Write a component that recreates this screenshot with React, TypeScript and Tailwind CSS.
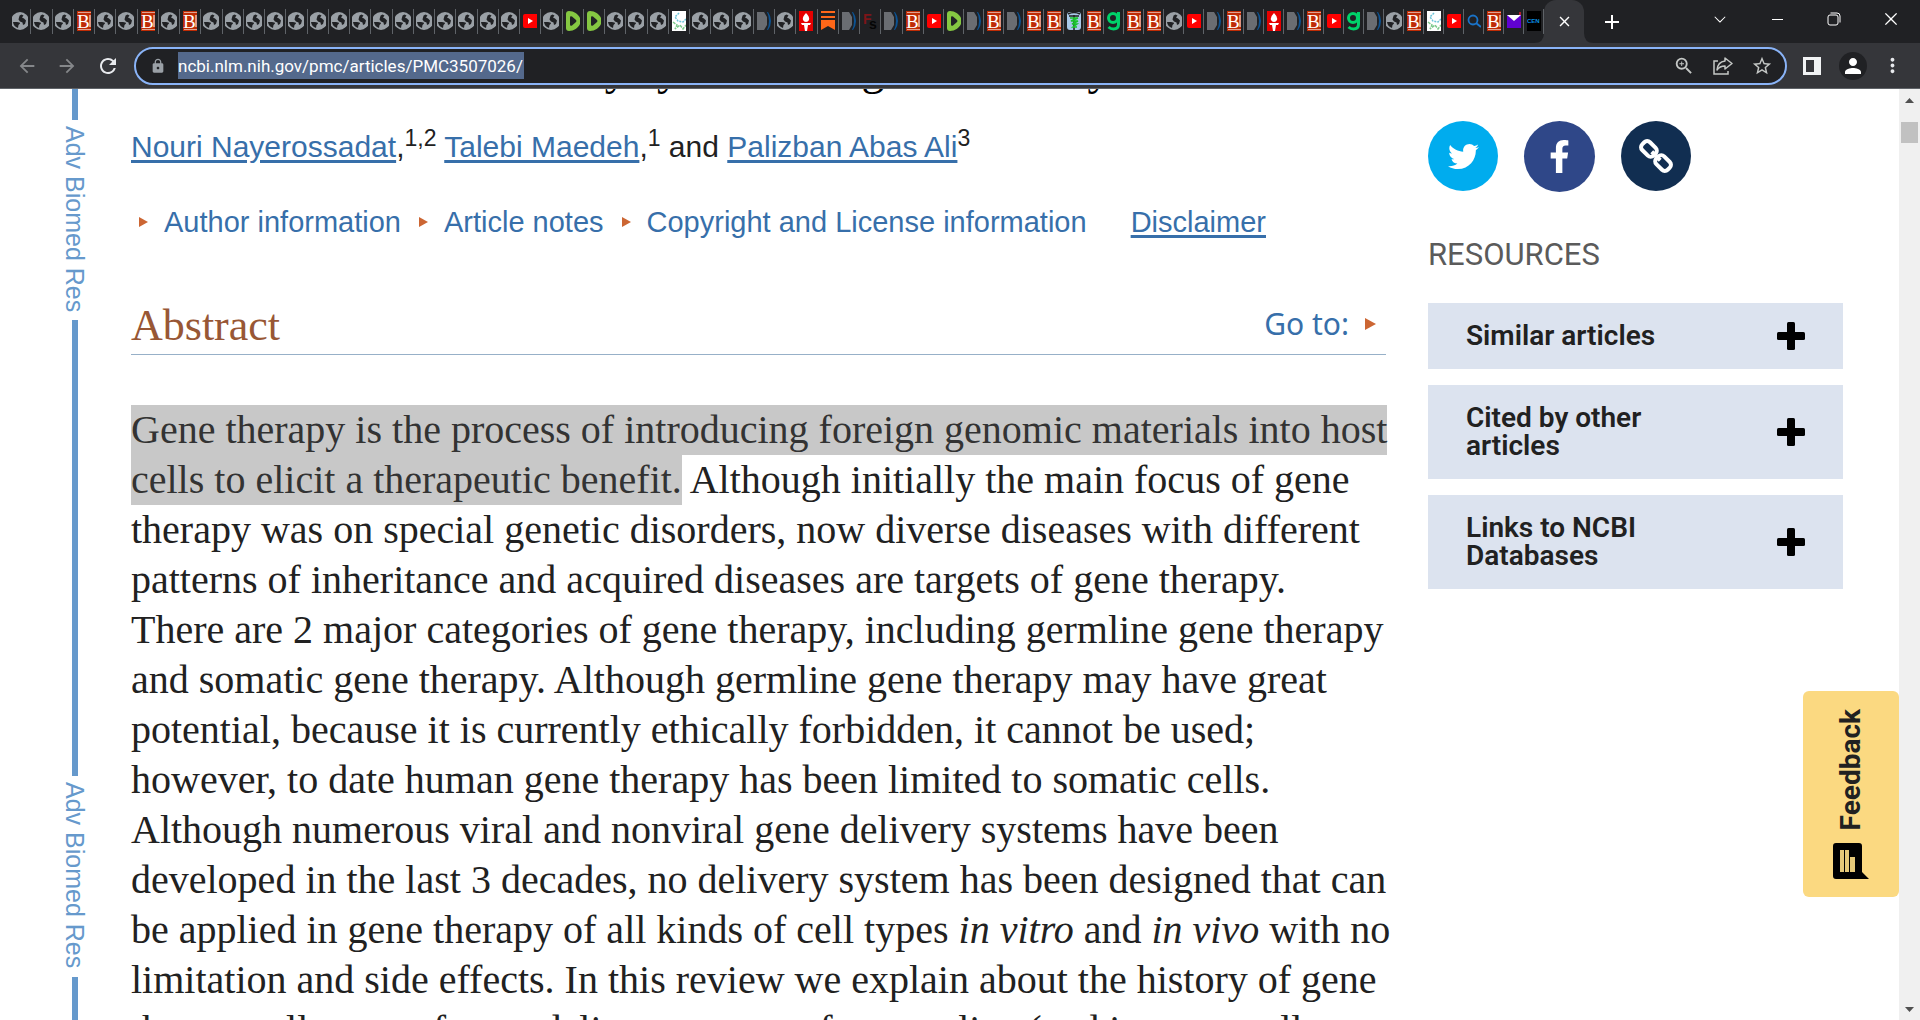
import React from "react";
import { FaTwitter, FaFacebookF } from "react-icons/fa";
import {
  MdArrowBack,
  MdArrowForward,
  MdRefresh,
  MdLock,
  MdStarBorder,
  MdZoomIn,
  MdPerson,
  MdMoreVert,
  MdAdd,
  MdClose,
} from "react-icons/md";
import { VscChromeMinimize, VscChromeClose, VscChevronDown } from "react-icons/vsc";

type IconName =
  | "globe"
  | "britannica"
  | "youtube"
  | "rumble"
  | "molecule"
  | "page"
  | "torch"
  | "substack"
  | "fs"
  | "medical"
  | "guru"
  | "search"
  | "mail"
  | "cen";

const codes: Record<string, IconName> = {
  G: "globe",
  B: "britannica",
  Y: "youtube",
  R: "rumble",
  M: "molecule",
  P: "page",
  T: "torch",
  S: "substack",
  F: "fs",
  C: "medical",
  U: "guru",
  Q: "search",
  E: "mail",
  N: "cen",
};

// one letter per open tab, in order
const wideTabs = "GGGBGGBGBGGGGGGGGGGGGGGGYGRRGGGMGGGPGTSPFPB";
const narrowTabs = "YRPBPBBCBUBBGYPBPTPBYUPGBMYQBEN";

const Favicon = ({ name }: { name: IconName }) => {
  switch (name) {
    case "globe":
      return (
        <svg width="20" height="20" viewBox="0 0 20 20">
          <circle cx="8" cy="10" r="9" fill="#9aa0a6" />
          <path
            d="M1 11h4q3 0 3 1.500L6.500 14l-.5 3Q1.500 15.500 1 11zM7 6.500Q7 4 9.500 3.500l2 1L10 6.500l2 1 2 2-1 3.500-2 1-.5-2.500-2.500-1L6.500 8.500z"
            fill="#202124"
          />
        </svg>
      );
    case "britannica":
      return (
        <svg width="20" height="20" viewBox="0 0 20 20">
          <rect width="20" height="20" fill="#bf2c05" />
          <path d="M1 1.500h18M1 18.500h18" stroke="#e2a18e" strokeWidth="1" />
          <text x="0" y="17" fontSize="19" fontFamily="Liberation Serif, serif" fill="#fff">
            B
          </text>
          <path d="M13 4v12" stroke="#fff" strokeWidth="1" />
        </svg>
      );
    case "youtube":
      return (
        <svg width="20" height="20" viewBox="0 0 20 20">
          <rect y="3" width="20" height="14" rx="2" fill="#f00" />
          <path d="M5 7l5 3-5 3z" fill="#fff" />
        </svg>
      );
    case "rumble":
      return (
        <svg width="20" height="20" viewBox="0 0 20 20">
          <path d="M0 3q0-3 3-3c5 0 9 3 11 7q1.500 3 0 6c-2 4-6 7-11 7q-3 0-3-3z" fill="#85c742" />
          <path d="M4 6.500q0-2 2-1l4 3.500q1 1 0 2l-4 3.500q-2 1-2-1z" fill="#202124" />
        </svg>
      );
    case "molecule":
      return (
        <svg width="20" height="20" viewBox="0 0 20 20">
          <rect width="20" height="20" fill="#fff" />
          <g fill="none" strokeWidth="1.500">
            <path d="M7 2L3 6l3 4 5 1 3-3" stroke="#6cc5d8" strokeDasharray="2 1" />
            <path d="M1 11l4 3-2 4 5-4 3 4 3-4" stroke="#7cc98c" strokeDasharray="3 1" />
          </g>
        </svg>
      );
    case "page":
      return (
        <svg width="20" height="20" viewBox="0 0 20 20">
          <path d="M0 1h7l3 5v8l-3 5H0z" fill="#6a6d72" />
          <path d="M10 1h1q3 4 3 9t-3 9h-1q2-4 2-9t-2-9z" fill="#0b5394" />
        </svg>
      );
    case "torch":
      return (
        <svg width="20" height="20" viewBox="0 0 20 20">
          <rect width="20" height="20" fill="#e60000" />
          <path d="M7 2q4 4 3 7-1 2-3 2t-3-2q-1-3 3-7zM2 12h10l-1 2H9l-1 6H6l-1-6H3z" fill="#fff" />
        </svg>
      );
    case "substack":
      return (
        <svg width="20" height="20" viewBox="0 0 20 20">
          <path d="M0 0h14v2H0zM0 5h14v2H0zM0 9h14v10l-7-4-7 4z" fill="#ff6719" />
        </svg>
      );
    case "fs":
      return (
        <svg width="20" height="20" viewBox="0 0 20 20" fontFamily="Liberation Sans, sans-serif" fontWeight="700">
          <text x="0" y="13" fontSize="14" fill="#7d1518">
            F
          </text>
          <text x="6" y="18" fontSize="14" fill="#050505">
            s
          </text>
        </svg>
      );
    case "medical":
      return (
        <svg width="20" height="20" viewBox="0 0 20 20">
          <rect y="1" width="14" height="18" rx="3" fill="#a9c9ea" />
          <path d="M1 3q6-3 12 0M2 5h10" fill="none" stroke="#222" strokeWidth="1.500" />
          <path d="M7 4v16" stroke="#222" strokeWidth="1.500" />
          <path d="M3 7h8L4 10h7l-6 3h5l-4 3h4" fill="none" stroke="#19c52b" strokeWidth="1.500" />
        </svg>
      );
    case "guru":
      return (
        <svg width="20" height="20" viewBox="0 0 20 20">
          <g fill="none" stroke="#00d26a" strokeWidth="3">
            <circle cx="6" cy="7" r="4.500" />
            <path d="M11.500 1v12q0 5-5 5-3 0-5-2" />
          </g>
        </svg>
      );
    case "search":
      return (
        <svg width="20" height="20" viewBox="0 0 20 20">
          <circle cx="6" cy="9" r="4.500" fill="none" stroke="#1a73c8" strokeWidth="1.800" />
          <path d="M9 12l5 4" stroke="#1a73c8" strokeWidth="2" />
        </svg>
      );
    case "mail":
      return (
        <svg width="20" height="20" viewBox="0 0 20 20">
          <rect y="4" width="20" height="13" fill="#6001d2" />
          <path d="M0 4h14l-7 6z" fill="#fff" />
          <path d="M13 1v3" stroke="#e0202c" strokeWidth="1.500" />
        </svg>
      );
    case "cen":
      return (
        <svg width="20" height="20" viewBox="0 0 20 20">
          <rect width="20" height="20" fill="#000" />
          <text x="0" y="12" fontSize="6" fontWeight="700" fontFamily="Liberation Sans, sans-serif" fill="#0a8fe0">
            CEN
          </text>
        </svg>
      );
  }
};

const TabGroup = ({ tabs, className }: { tabs: string; className: string }) => (
  <div className={`flex h-full items-center pb-px ${className}`}>
    {tabs.split("").map((code, i) => (
      <button
        key={i}
        aria-label={`${codes[code]} tab`}
        className="flex h-[25px] flex-1 items-center justify-center border-r border-[#5f6368]"
      >
        <span className={code === "G" ? "block h-5 w-4 overflow-hidden" : "block h-5 w-[14px] overflow-hidden"}>
          <Favicon name={codes[code]} />
        </span>
      </button>
    ))}
  </div>
);

const TabStrip = () => (
  <div className="flex h-[43px] shrink-0 items-center justify-between bg-[#202124] text-white">
    <div className="flex h-full items-center pl-[10px]">
      <TabGroup tabs={wideTabs} className="w-[914px]" />
      <TabGroup tabs={narrowTabs} className="w-[620px]" />
      <div className="relative flex h-full w-10 items-center justify-center rounded-t-xl bg-[#35363a]">
        <svg className="absolute bottom-0 -left-[10px]" width="10" height="10">
          <path d="M10 0v10H0Q10 10 10 0z" fill="#35363a" />
        </svg>
        <svg className="absolute bottom-0 -right-[10px]" width="10" height="10">
          <path d="M0 0v10h10Q0 10 0 0z" fill="#35363a" />
        </svg>
        <button aria-label="Close tab">
          <MdClose size={17} />
        </button>
      </div>
      <button aria-label="New tab" className="ml-4">
        <MdAdd size={24} />
      </button>
    </div>
    <div className="flex h-[37px] items-center self-start pr-px">
      <button aria-label="Search tabs" className="flex w-[57px] justify-center">
        <VscChevronDown size={18} />
      </button>
      <button aria-label="Minimize" className="flex w-[57px] justify-center">
        <VscChromeMinimize size={16} />
      </button>
      <button aria-label="Restore" className="flex w-[57px] justify-center">
        <svg width="14" height="14" viewBox="0 0 14 14" fill="none" stroke="#fff">
          <rect x="1" y="3" width="10" height="10" rx="2" />
          <path d="M3.500 1H10q3 0 3 3v6.500" />
        </svg>
      </button>
      <button aria-label="Close" className="flex w-[57px] justify-center">
        <VscChromeClose size={18} />
      </button>
    </div>
  </div>
);

const Toolbar = () => (
  <div className="flex h-[46px] shrink-0 items-center border-b border-[#5f6368] bg-[#35363a] px-4 text-[#e8eaed]">
    <button aria-label="Back" className="mr-[18px] text-[#85878a]">
      <MdArrowBack size={22} />
    </button>
    <button aria-label="Forward" className="mr-[18px] text-[#85878a]">
      <MdArrowForward size={22} />
    </button>
    <button aria-label="Reload" className="mr-[14px]">
      <MdRefresh size={24} />
    </button>
    <div className="flex h-[38px] flex-1 items-center rounded-full border-2 border-[#8ab4f8] bg-[#202124] pr-3 pl-[14px]">
      <MdLock size={16} className="mr-[12px] text-[#9aa0a6]" />
      <input
        aria-label="Address"
        readOnly
        defaultValue="ncbi.nlm.nih.gov/pmc/articles/PMC3507026/"
        className="h-[27px] w-[346px] bg-[#54698c] font-['Roboto',sans-serif] text-[17px] text-white outline-none"
      />
      <div className="ml-auto flex items-center gap-[18px] text-[#c4c7c5]">
        <button aria-label="Zoom">
          <MdZoomIn size={22} />
        </button>
        <button aria-label="Share">
          <svg width="20" height="20" viewBox="0 0 20 20" fill="none" stroke="currentColor" strokeWidth="1.500">
            <path d="M5 5H1v13h14v-3" />
            <path d="M12 2l7 5.500-7 5.500v-3c-4 0-6 1-8 4 .5-5 3-8.500 8-9z" strokeLinejoin="round" />
          </svg>
        </button>
        <button aria-label="Bookmark">
          <MdStarBorder size={22} />
        </button>
      </div>
    </div>
    <button aria-label="Side panel" className="ml-4">
      <svg width="18" height="18" viewBox="0 0 18 18">
        <path d="M0 0h18v18H0zM3 3v12h8V3z" fill="#f1f3f4" fillRule="evenodd" />
      </svg>
    </button>
    <button
      aria-label="Profile"
      className="ml-[18px] flex size-7 items-center justify-center rounded-full bg-[#202124] text-white"
    >
      <MdPerson size={24} />
    </button>
    <button aria-label="Menu" className="ml-[14px]">
      <MdMoreVert size={23} />
    </button>
  </div>
);

const Arrow = ({ large }: { large?: boolean }) => (
  <svg width={large ? 11 : 9} height={large ? 12 : 10} viewBox="0 0 10 10" preserveAspectRatio="none" className="shrink-0">
    <path d="M0 0l10 5-10 5z" fill="#cc6633" />
  </svg>
);

const JournalSpine = () => (
  <div className="flex w-[29px] shrink-0 flex-col items-center overflow-hidden text-[25px] leading-[29px] text-[#6699cc]">
    <div className="h-[31px] w-[6px] shrink-0 bg-[#6699cc]" />
    <span className="h-[200px] shrink-0 pt-[6px] whitespace-nowrap [writing-mode:vertical-rl]">Adv Biomed Res</span>
    <div className="h-[456px] w-[6px] shrink-0 bg-[#6699cc]" />
    <span className="h-[201px] shrink-0 pt-[6px] whitespace-nowrap [writing-mode:vertical-rl]">Adv Biomed Res</span>
    <div className="h-[300px] w-[6px] shrink-0 bg-[#6699cc]" />
  </div>
);

const Author = ({ children }: { children: React.ReactNode }) => (
  <a href="#" className="text-[#376faa] underline decoration-[3px] underline-offset-[3px]">
    {children}
  </a>
);

const Sup = ({ children }: { children: React.ReactNode }) => (
  <sup className="-top-[11px] align-baseline text-[23px] leading-[0px]">{children}</sup>
);

const Article = () => (
  <article className="min-w-0 flex-1 font-['Liberation_Serif',serif] text-[#212121]">
    <h1 className="-mt-[45px] text-[46px] leading-[50px] whitespace-nowrap text-black">
      Viral and nonviral delivery systems for gene delivery
    </h1>
    <p className="mt-[31px] font-['Liberation_Sans',sans-serif] text-[30px] leading-[44px]">
      <Author>Nouri Nayerossadat</Author>,<Sup>1,2</Sup> <Author>Talebi Maedeh</Author>,<Sup>1</Sup> and{" "}
      <Author>Palizban Abas Ali</Author>
      <Sup>3</Sup>
    </p>
    <div className="mt-[31px] flex items-center pl-2 font-['Liberation_Sans',sans-serif] text-[29px] leading-[44px] whitespace-nowrap text-[#376faa]">
      <a href="#" className="mr-[18px] flex items-center gap-4">
        <Arrow />
        Author information
      </a>
      <a href="#" className="mr-[18px] flex items-center gap-4">
        <Arrow />
        Article notes
      </a>
      <a href="#" className="mr-11 flex items-center gap-4">
        <Arrow />
        Copyright and License information
      </a>
      <a href="#" className="underline decoration-[3px] underline-offset-[3px]">
        Disclaimer
      </a>
    </div>
    <div className="mt-[57px] flex items-center justify-between border-b border-[#97b0c8] pr-[10px] pb-[3px]">
      <h2 className="text-[44px] leading-[50px] text-[#985735]">Abstract</h2>
      <a href="#" className="flex items-center gap-4 pb-1 font-['Noto_Sans',sans-serif] text-[30px] leading-[46px] text-[#376faa]">
        Go to:
        <Arrow large />
      </a>
    </div>
    <p className="mt-[50px] text-[40px] leading-[50px] whitespace-nowrap">
      <span className="inline-block min-w-full bg-[#c8c8c8] align-top text-[#333]">
        Gene therapy is the process of introducing foreign genomic materials into host
      </span>
      <br />
      <span className="inline-block bg-[#c8c8c8] align-top text-[#333]">cells to elicit a therapeutic benefit.</span>{" "}
      Although initially the main focus of gene
      <br />
      therapy was on special genetic disorders, now diverse diseases with different
      <br />
      patterns of inheritance and acquired diseases are targets of gene therapy.
      <br />
      There are 2 major categories of gene therapy, including germline gene therapy
      <br />
      and somatic gene therapy. Although germline gene therapy may have great
      <br />
      potential, because it is currently ethically forbidden, it cannot be used;
      <br />
      however, to date human gene therapy has been limited to somatic cells.
      <br />
      Although numerous viral and nonviral gene delivery systems have been
      <br />
      developed in the last 3 decades, no delivery system has been designed that can
      <br />
      be applied in gene therapy of all kinds of cell types <i>in vitro</i> and <i>in vivo</i> with no
      <br />
      limitation and side effects. In this review we explain about the history of gene
      <br />
      therapy, all types of gene delivery systems for germline (and in some cell
    </p>
  </article>
);

const LinkIcon = () => (
  <svg width="34" height="34" viewBox="0 0 34 34" fill="none" stroke="currentColor" strokeWidth="4">
    <g transform="rotate(45 17 17)">
      <rect x="-1" y="11.500" width="16" height="11" rx="4" />
      <rect x="19" y="11.500" width="16" height="11" rx="4" />
      <path d="M11 17h12" />
    </g>
  </svg>
);

const PlusIcon = () => (
  <svg width="28" height="28" viewBox="0 0 28 28" className="shrink-0">
    <rect x="10" width="8" height="28" rx="1.500" />
    <rect y="10" width="28" height="8" rx="1.500" />
  </svg>
);

const resources = ["Similar articles", "Cited by other articles", "Links to NCBI Databases"];

const Sidebar = () => (
  <aside className="w-[415px] shrink-0 pt-8 font-['Roboto',sans-serif]">
    <div className="flex gap-[26px] text-white">
      <a href="#" aria-label="Twitter" className="flex size-[70px] items-center justify-center rounded-full bg-[#00acee]">
        <FaTwitter size={31} />
      </a>
      <a href="#" aria-label="Facebook" className="flex size-[71px] items-center justify-center rounded-full bg-[#2f4788]">
        <FaFacebookF size={33} />
      </a>
      <a href="#" aria-label="Permalink" className="flex size-[70px] items-center justify-center rounded-full bg-[#112e51]">
        <LinkIcon />
      </a>
    </div>
    <h2 className="mt-[45px] mb-[30px] text-[31px] leading-9 text-[#5b5b5b]">RESOURCES</h2>
    <div className="flex flex-col gap-4">
      {resources.map((title) => (
        <button
          key={title}
          className="flex items-center justify-between bg-[#dce3ef] px-[38px] py-[19px] text-left text-[28px] leading-7 font-semibold text-[#212121]"
        >
          <span className="max-w-[230px]">{title}</span>
          <PlusIcon />
        </button>
      ))}
    </div>
  </aside>
);

const Feedback = () => (
  <button className="absolute top-[602px] right-[21px] flex h-[206px] w-24 flex-col items-center justify-center gap-3 rounded-md bg-[#fbd981] text-[#212121]">
    <span className="rotate-180 font-['Roboto',sans-serif] text-[28px] leading-8 font-bold [writing-mode:vertical-rl]">
      Feedback
    </span>
    <svg width="36" height="36" viewBox="0 0 36 36">
      <path d="M3 0h23q3 0 3 3v26l7 7H3q-3 0-3-3V3q0-3 3-3z" fill="#000" />
      <path d="M7 7h4v22H7zM12 7h4v22h-4zM17 14h5v15h-5z" fill="#e5c878" />
    </svg>
  </button>
);

const Scrollbar = () => (
  <div className="flex w-[21px] shrink-0 flex-col items-center bg-[#f0f0f0]">
    <svg width="9" height="5" className="mt-[9px] mb-[19px] shrink-0">
      <path d="M0 5l4.500-5L9 5z" fill="#505050" />
    </svg>
    <div className="h-[21px] w-[17px] bg-[#c1c1c1]" />
    <svg width="9" height="5" className="mt-auto mb-[8px] shrink-0">
      <path d="M0 0h9L4.500 5z" fill="#505050" />
    </svg>
  </div>
);

const App = () => {
  return (
    <div className="flex h-screen flex-col overflow-hidden bg-white font-['Liberation_Sans',Arial,sans-serif]">
      <TabStrip />
      <Toolbar />
      <div className="relative flex min-h-0 flex-1 overflow-hidden">
        <main className="flex min-w-0 flex-1 overflow-hidden pr-14 pl-[60px]">
          <JournalSpine />
          <div className="flex min-w-0 flex-1 gap-[42px] pl-[42px]">
            <Article />
            <Sidebar />
          </div>
        </main>
        <Feedback />
        <Scrollbar />
      </div>
    </div>
  );
};

export default App;
